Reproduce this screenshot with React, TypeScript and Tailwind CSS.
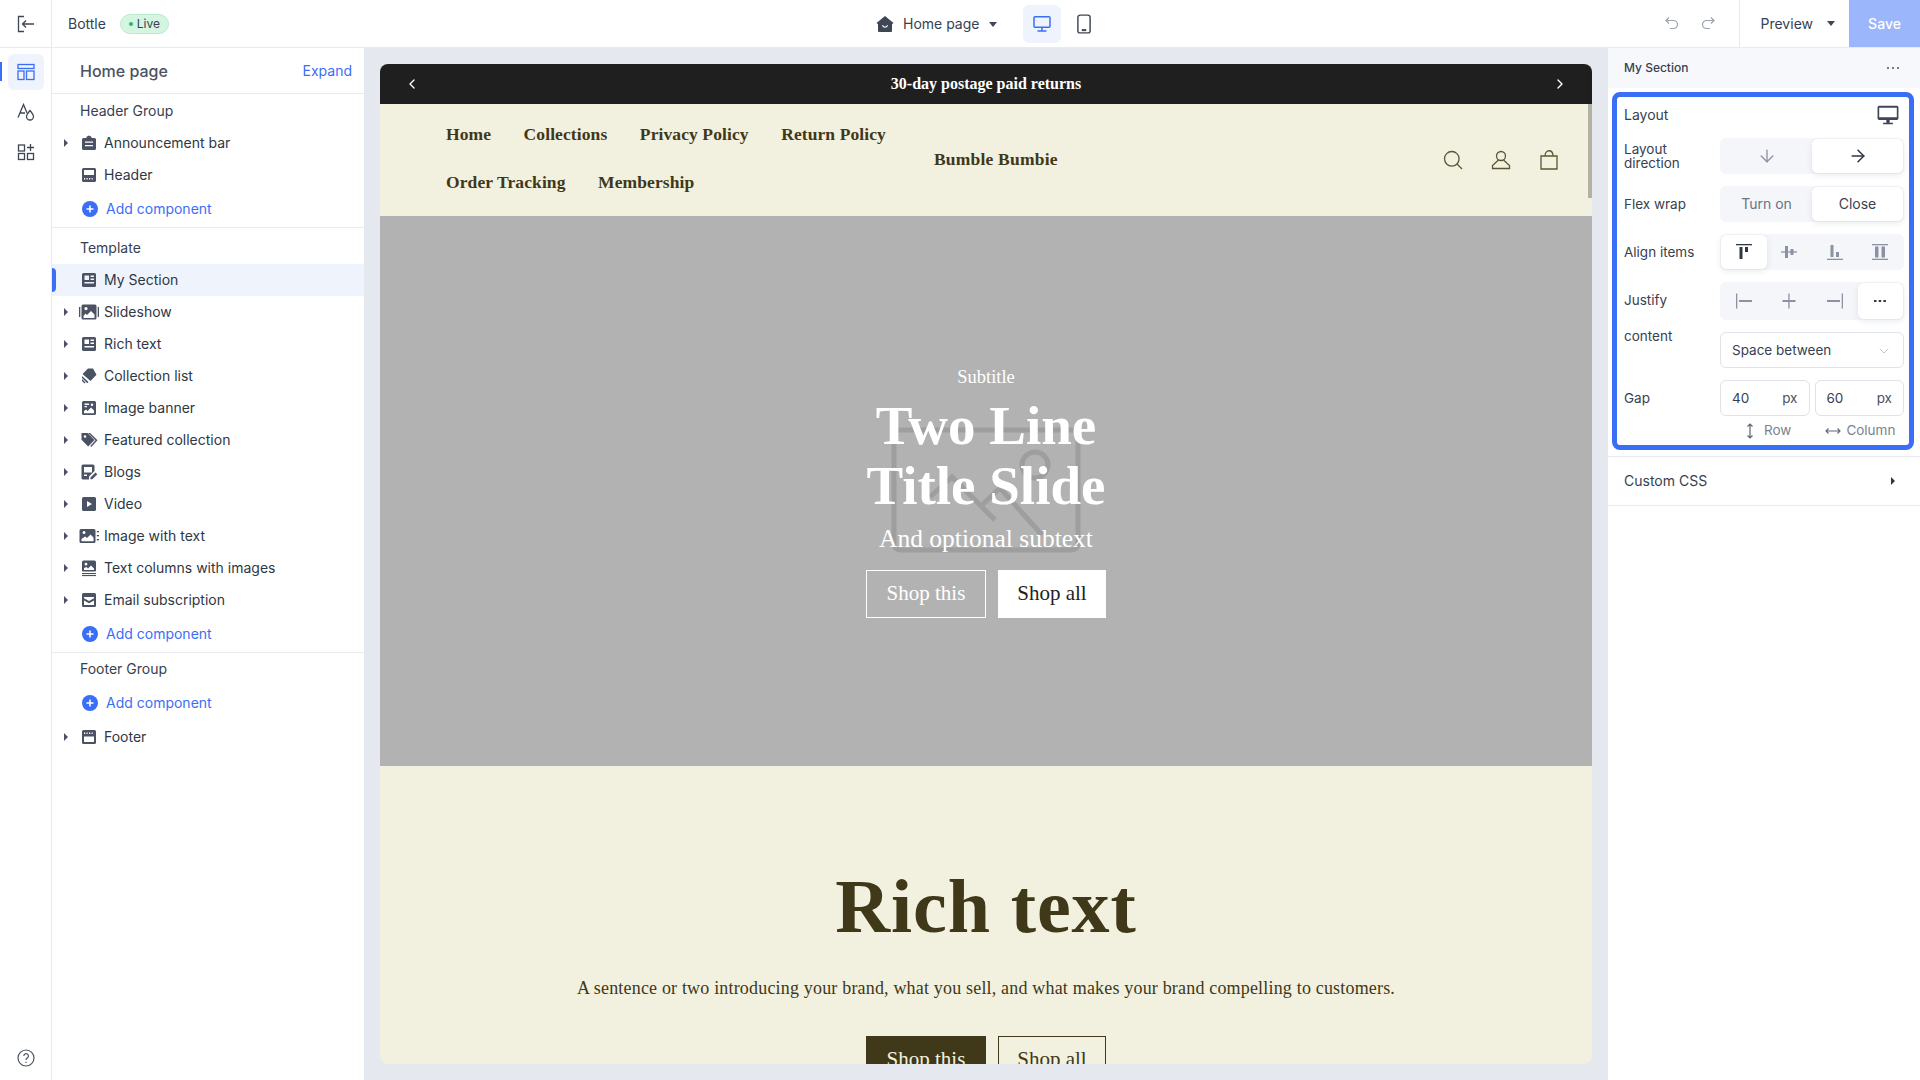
import { ArrowDown, ArrowRight, ChevronDown, ChevronLeft, ChevronRight } from "lucide-react";
import type { ReactNode } from "react";

const SERIF = "font-['Liberation_Serif',serif]";

function Glyph({ children, className = "w-5 h-5" }: { children: ReactNode; className?: string }) {
  return (
    <svg viewBox="0 0 20 20" className={`${className} shrink-0`} fill="#4b5263">
      {children}
    </svg>
  );
}

const icons: Record<string, ReactNode> = {
  announcement: (
    <Glyph>
      <path fillRule="evenodd" d="M7.5 5V3.8L10 2.5l2.500 1.300V5h3A1.500 1.500 0 0 1 17 6.500v9a1.500 1.500 0 0 1-1.500 1.500h-11A1.500 1.500 0 0 1 3 15.500v-9A1.500 1.500 0 0 1 4.500 5zM6 8.500v1.300h8V8.500zm0 3.500v1.300h8V12z" />
    </Glyph>
  ),
  header: (
    <Glyph>
      <path fillRule="evenodd" d="M4.500 3h11A1.500 1.500 0 0 1 17 4.500v11a1.500 1.500 0 0 1-1.500 1.500h-11A1.500 1.500 0 0 1 3 15.500v-11A1.500 1.500 0 0 1 4.500 3zM5 5v5h10V5zm0 8v1.500h1.200V13zm2.500 0v1.500h1.200V13zm2.500 0v1.500h1.200V13zm2.500 0v1.500h1.200V13z" />
    </Glyph>
  ),
  section: (
    <Glyph>
      <path fillRule="evenodd" d="M4.500 3h11A1.500 1.500 0 0 1 17 4.500v11a1.500 1.500 0 0 1-1.500 1.500h-11A1.500 1.500 0 0 1 3 15.500v-11A1.500 1.500 0 0 1 4.500 3zM5.500 5.500V10H10V5.500zm6 0V7H15V5.500zm0 3V10H15V8.500zM5.500 12v1.500H15V12z" />
    </Glyph>
  ),
  slideshow: (
    <Glyph>
      <rect x="0" y="5" width="1.300" height="10" />
      <rect x="18.700" y="5" width="1.300" height="10" />
      <path fillRule="evenodd" d="M4 2.500h12A1.500 1.500 0 0 1 17.500 4v12a1.500 1.500 0 0 1-1.500 1.500H4A1.500 1.500 0 0 1 2.500 16V4A1.500 1.500 0 0 1 4 2.500zm.5 11.500v2h11v-3.500L12 9l-4 4-1.500-1.500zM7 5a1.600 1.600 0 1 0 0 3.200A1.600 1.600 0 0 0 7 5z" />
    </Glyph>
  ),
  collection: (
    <Glyph>
      <path d="M9 2.500h5l3.500 6.200-6 6.300L3.500 8zM3 10l6.500 6-1.200 1.200L3 12zM3 13l3.500 3.500-1 .9L3 15z" />
    </Glyph>
  ),
  banner: (
    <Glyph>
      <path fillRule="evenodd" d="M4.500 3h11A1.500 1.500 0 0 1 17 4.500v11a1.500 1.500 0 0 1-1.500 1.500h-11A1.500 1.500 0 0 1 3 15.500v-11A1.500 1.500 0 0 1 4.500 3zM5 13v2.200h10v-2.700l-3-3-3.500 3.500-1.500-1.500zM5.500 5.500V7H10V5.500zm0 2.500v1.200H8V8zm7.500-2.500a1.300 1.300 0 1 0 0 2.600 1.300 1.300 0 0 0 0-2.600z" />
    </Glyph>
  ),
  featured: (
    <Glyph>
      <path d="M2.500 3h6l7 7-6.300 6.500-6.700-6.800zM11 3l7.500 7.300-6.200 6.700-1-1 5.200-5.700L9 3z" />
      <circle cx="6" cy="6.500" r="1.200" fill="#fff" />
    </Glyph>
  ),
  blogs: (
    <Glyph>
      <path fillRule="evenodd" d="M4 2.500h10A1.500 1.500 0 0 1 15.500 4v5l-5.500 5.500V17.500H4A1.500 1.500 0 0 1 2.500 16V4A1.500 1.500 0 0 1 4 2.500zM5 5v5.500h8V5zm0 7.500V14h3v-1.500z" />
      <path d="M16.500 10.500l1.800 1.800-5 5H11.500v-1.800z" />
    </Glyph>
  ),
  video: (
    <Glyph>
      <path fillRule="evenodd" d="M4.500 3h11A1.500 1.500 0 0 1 17 4.500v11a1.500 1.500 0 0 1-1.500 1.500h-11A1.500 1.500 0 0 1 3 15.500v-11A1.500 1.500 0 0 1 4.500 3zM8 7v6l5-3z" />
    </Glyph>
  ),
  imageText: (
    <Glyph>
      <path fillRule="evenodd" d="M2 3h13A1.500 1.500 0 0 1 16.500 4.500v11a1.500 1.500 0 0 1-1.500 1.500H2A1.500 1.500 0 0 1 .5 15.500v-11A1.500 1.500 0 0 1 2 3zm.5 10v2.200h12v-3.700L11.500 8.500 8 12l-2-1.500zM5 5a1.500 1.500 0 1 0 0 3 1.500 1.500 0 0 0 0-3z" />
      <rect x="17.800" y="5" width="2.200" height="1.300" />
      <rect x="17.800" y="9" width="2.200" height="1.300" />
      <rect x="17.800" y="13" width="2.200" height="1.300" />
    </Glyph>
  ),
  columns: (
    <Glyph>
      <path fillRule="evenodd" d="M4.500 2.500h11A1.500 1.500 0 0 1 17 4v8.500a1 1 0 0 1-1 1H4a1 1 0 0 1-1-1V4a1.500 1.500 0 0 1 1.500-1.500zM5 10v2h10v-1.500L12 7.500 9 10.500 7.500 9zM7 4.800a1.400 1.400 0 1 0 0 2.800 1.400 1.400 0 0 0 0-2.800z" />
      <rect x="3" y="15" width="14" height="1.100" />
      <rect x="3" y="17" width="14" height="1.100" />
    </Glyph>
  ),
  email: (
    <Glyph>
      <path fillRule="evenodd" d="M4.500 3h11A1.500 1.500 0 0 1 17 4.500v11a1.500 1.500 0 0 1-1.500 1.500h-11A1.500 1.500 0 0 1 3 15.500v-11A1.500 1.500 0 0 1 4.500 3zM5 7v1.300l5 2.700 5-2.700V7zm0 3.600V15h10v-4.400l-5 2.700z" />
    </Glyph>
  ),
  footer: (
    <Glyph>
      <path fillRule="evenodd" d="M4.500 3h11A1.500 1.500 0 0 1 17 4.500v11a1.500 1.500 0 0 1-1.500 1.500h-11A1.500 1.500 0 0 1 3 15.500v-11A1.500 1.500 0 0 1 4.500 3zM5 5.500V7h1.200V5.500zm2.500 0V7h1.200V5.500zm2.500 0V7h1.200V5.500zm2.500 0V7h1.200V5.500zM5 9.500V15h10V9.500z" />
    </Glyph>
  ),
};

function Caret({ className = "border-l-[#4b5263]" }: { className?: string }) {
  return <span className={`w-0 h-0 border-y-[4px] border-y-transparent border-l-[4px] ${className}`} />;
}

function CaretDown() {
  return <span className="w-0 h-0 border-x-[4px] border-x-transparent border-t-[5px] border-t-[#3f4654]" />;
}

function TreeRow({ icon, label, arrow = true, active = false }: { icon: string; label: string; arrow?: boolean; active?: boolean }) {
  return (
    <div className={`relative flex items-center h-8 ${active ? "bg-[#eff4fc]" : ""}`}>
      {active && <span className="absolute left-0 top-1 w-1 h-6 rounded-r bg-[#3b6ef6]" />}
      <span className="w-[27px] pl-[12px] flex items-center">{arrow && <Caret />}</span>
      <span className="w-[25px] flex items-center">{icons[icon]}</span>
      <span className="text-sm text-[#2f3744]">{label}</span>
    </div>
  );
}

function AddComponent() {
  return (
    <div className="flex items-center h-8 pl-[30px] gap-[8px]">
      <svg viewBox="0 0 16 16" className="w-4 h-4">
        <circle cx="8" cy="8" r="8" fill="#3b6ef6" />
        <path d="M8 4.500v7M4.500 8h7" stroke="#fff" strokeWidth="1.500" />
      </svg>
      <span className="text-sm text-[#3b6ef6]">Add component</span>
    </div>
  );
}

function GroupLabel({ children }: { children: ReactNode }) {
  return <div className="pl-[28px] text-sm text-[#374151] h-5 leading-5">{children}</div>;
}

function Sidebar() {
  return (
    <aside className="w-[312px] shrink-0 bg-white flex flex-col">
      <div className="h-[46px] flex items-center justify-between pl-[28px] pr-[12px] border-b border-[#e8eaee]">
        <span className="text-base font-medium text-[#4b5263]">Home page</span>
        <span className="text-sm text-[#3b6ef6]">Expand</span>
      </div>
      <div className="pt-[7px] pb-[2px] border-b border-[#e8eaee]">
        <div className="pb-[6px]"><GroupLabel>Header Group</GroupLabel></div>
        <TreeRow icon="announcement" label="Announcement bar" />
        <TreeRow icon="header" label="Header" arrow={false} />
        <div className="pt-[2px]"><AddComponent /></div>
      </div>
      <div className="pt-[10px] pb-[2px] border-b border-[#e8eaee]">
        <div className="pb-[6px]"><GroupLabel>Template</GroupLabel></div>
        <TreeRow icon="section" label="My Section" arrow={false} active />
        <TreeRow icon="slideshow" label="Slideshow" />
        <TreeRow icon="section" label="Rich text" />
        <TreeRow icon="collection" label="Collection list" />
        <TreeRow icon="banner" label="Image banner" />
        <TreeRow icon="featured" label="Featured collection" />
        <TreeRow icon="blogs" label="Blogs" />
        <TreeRow icon="video" label="Video" />
        <TreeRow icon="imageText" label="Image with text" />
        <TreeRow icon="columns" label="Text columns with images" />
        <TreeRow icon="email" label="Email subscription" />
        <div className="pt-[2px]"><AddComponent /></div>
      </div>
      <div className="pt-[6px]">
        <div className="pb-[8px]"><GroupLabel>Footer Group</GroupLabel></div>
        <AddComponent />
        <div className="pt-[2px]"><TreeRow icon="footer" label="Footer" /></div>
      </div>
    </aside>
  );
}

function Rail() {
  return (
    <nav className="relative w-[52px] shrink-0 bg-white border-r border-[#e8eaee] flex flex-col items-center pt-[6px]">
      <span className="absolute left-0 top-[14px] w-[2px] h-[19px] bg-[#3b6ef6]" />
      <div className="w-9 h-9 rounded-md bg-[#eff4fc] flex items-center justify-center">
        <svg viewBox="0 0 18 18" className="w-[18px] h-[18px]" fill="none" stroke="#3b6ef6" strokeWidth="1.300">
          <rect x="1" y="1.500" width="16" height="4" />
          <rect x="1" y="8" width="6" height="8.500" />
          <rect x="9.500" y="8" width="7.500" height="8.500" />
        </svg>
      </div>
      <div className="h-10 mt-[2px] flex items-center">
        <svg viewBox="0 0 18 18" className="w-[18px] h-[18px]" fill="none" stroke="#3f4654" strokeWidth="1.300">
          <path d="M1 14.500 6.500 1.500 10 10M3 10h5" />
          <path d="M13 7.500c2 2.500 3.500 4 3.500 6a3.500 3.500 0 0 1-7 0c0-2 1.500-3.500 3.500-6z" />
        </svg>
      </div>
      <div className="h-10 flex items-center">
        <svg viewBox="0 0 18 18" className="w-[18px] h-[18px]" fill="none" stroke="#3f4654" strokeWidth="1.300">
          <rect x="1.500" y="2" width="6" height="6" />
          <rect x="1.500" y="10.500" width="6" height="6" />
          <rect x="10.500" y="10.500" width="6" height="6" />
          <path d="M13.500 1v7M10 4.500h7" />
        </svg>
      </div>
      <div className="mt-auto pb-[13px] flex">
        <svg viewBox="0 0 18 18" className="w-[18px] h-[18px]" fill="none" stroke="#4b5263" strokeWidth="1.200">
          <circle cx="9" cy="9" r="8" />
          <path d="M6.800 7a2.300 2.300 0 1 1 3.500 2c-.9.500-1.300 1-1.300 2" />
          <path d="M9 12.800v1.200" />
        </svg>
      </div>
    </nav>
  );
}

function TopBar() {
  return (
    <header className="h-12 shrink-0 bg-white border-b border-[#e8eaee] flex items-center relative">
      <div className="w-[52px] h-full border-r border-[#e8eaee] flex items-center justify-center">
        <svg viewBox="0 0 18 18" className="w-[18px] h-[18px]" fill="none" stroke="#3f4654" strokeWidth="1.300">
          <path d="M7 1.500H1.500v15H7" />
          <path d="M17 9H5.500M9 5.500 5.500 9 9 12.500" />
        </svg>
      </div>
      <span className="ml-4 text-sm text-[#374151]">Bottle</span>
      <span className="ml-[14px] h-5 w-[49px] rounded-full bg-[#d3f5e1] border border-[#b9eccd] flex items-center justify-center gap-[4px] text-xs text-[#374151]">
        <span className="w-1 h-1 rounded-full bg-[#33b36b]" />
        Live
      </span>
      <div className="absolute left-[876px] top-[5px] flex items-center">
        <svg viewBox="0 0 18 18" className="w-[18px] h-[18px]" fill="#3f4654">
          <path fillRule="evenodd" d="M9 1 17.500 8 16 9.200V16a1 1 0 0 1-1 1H3a1 1 0 0 1-1-1V9.200L.5 8zM6 10.500c.6 1.500 1.700 2.200 3 2.200s2.400-.7 3-2.200l-1-.4c-.4 1-1.100 1.500-2 1.500s-1.600-.5-2-1.500z" />
        </svg>
        <span className="ml-[9px] text-sm text-[#374151]">Home page</span>
        <span className="ml-[10px] flex"><CaretDown /></span>
        <div className="ml-[26px] w-[38px] h-[38px] rounded-md bg-[#eff4fc] flex items-center justify-center">
          <svg viewBox="0 0 18 18" className="w-[18px] h-[18px]" fill="none" stroke="#3b6ef6" strokeWidth="1.500">
            <rect x="1" y="1.800" width="16" height="10.500" rx="1" />
            <path d="M9 12.500v3.200M4.500 16h9" />
          </svg>
        </div>
        <div className="ml-[13px] flex">
          <svg viewBox="0 0 18 18" className="w-[20px] h-[20px]" fill="none" stroke="#3f4654" strokeWidth="1.300">
            <rect x="3.500" y="1" width="11" height="16" rx="2" />
            <path d="M7 14.500h4" strokeWidth="1.800" />
          </svg>
        </div>
      </div>
      <div className="ml-auto h-full flex items-center">
        <svg viewBox="0 0 16 16" className="w-4 h-4" fill="none" stroke="#9ca3af" strokeWidth="1.200">
          <path d="M5 1.500 2 4.500l3 3M2 4.500h7.500a4 4 0 0 1 0 8H6" />
        </svg>
        <svg viewBox="0 0 16 16" className="ml-[20px] w-4 h-4" fill="none" stroke="#9ca3af" strokeWidth="1.200">
          <path d="M11 1.500l3 3-3 3M14 4.500H6.500a4 4 0 0 0 0 8H10" />
        </svg>
        <div className="ml-[23px] h-full pl-[21px] pr-[14px] border-l border-[#e8eaee] flex items-center gap-[14px]">
          <span className="text-sm text-[#374151]">Preview</span>
          <CaretDown />
        </div>
        <div className="h-full w-[71px] bg-[#9cb6fb] text-white text-sm font-medium flex items-center justify-center">Save</div>
      </div>
    </header>
  );
}

function AlignIcon({ d, color }: { d: ReactNode; color: string }) {
  return (
    <svg viewBox="0 0 16 16" className="w-4 h-4" fill={color}>
      {d}
    </svg>
  );
}

function Segment({ children, className = "" }: { children: ReactNode; className?: string }) {
  return <div className={`flex-1 flex bg-[#f5f6fa] rounded-md p-[1px] ${className}`}>{children}</div>;
}

function Cell({ on = false, children }: { on?: boolean; children: ReactNode }) {
  return (
    <div className={`flex-1 flex items-center justify-center rounded-md text-sm ${on ? "bg-white shadow-[0_2px_6px_rgba(30,40,70,0.10)] text-[#374151]" : "text-[#6b7280]"}`}>
      {children}
    </div>
  );
}

const GREY = "#8b92a1";
const DARK = "#2f3744";

function Inspector() {
  return (
    <aside className="w-[312px] shrink-0 bg-white flex flex-col">
      <div className="h-[40px] bg-[#f7f8fb] flex items-center justify-between pl-4 pr-[21px]">
        <span className="text-xs font-medium text-[#374151]">My Section</span>
        <span className="flex gap-[3px]">
          <i className="w-[2px] h-[2px] rounded-full bg-[#4b5263]" />
          <i className="w-[2px] h-[2px] rounded-full bg-[#4b5263]" />
          <i className="w-[2px] h-[2px] rounded-full bg-[#4b5263]" />
        </span>
      </div>
      <div className="mt-1 ml-1 mr-[6px] rounded-lg border-[5px] border-[#3b6ef6] pl-[7px] pr-[5px] h-[358px] flex flex-col text-[#374151] text-sm">
        <div className="h-[36px] flex items-center justify-between">
          <span>Layout</span>
          <svg viewBox="0 0 20 20" className="w-[22px] h-[22px] mr-[5px]" fill="#3f4654">
            <path fillRule="evenodd" d="M2 1.500h16A1.500 1.500 0 0 1 19.500 3v10a1.500 1.500 0 0 1-1.500 1.500H2A1.500 1.500 0 0 1 .5 13V3A1.500 1.500 0 0 1 2 1.500zm0 2V12h16V3.500z" />
            <path d="M8.500 14.500h3v2.500h3v1.500h-9V17h3z" />
          </svg>
        </div>
        <div className="flex h-[36px] mt-[5px]">
          <span className="w-[96px] text-[13.500px] leading-[14px] pt-[4px]">Layout direction</span>
          <Segment>
            <Cell><ArrowDown className="w-5 h-5" color={GREY} strokeWidth={1.600} /></Cell>
            <Cell on><ArrowRight className="w-5 h-5" color={DARK} strokeWidth={1.800} /></Cell>
          </Segment>
        </div>
        <div className="flex items-center h-[36px] mt-[12px]">
          <span className="w-[96px] text-[13.500px] pt-[1px]">Flex wrap</span>
          <Segment className="h-full">
            <Cell>Turn on</Cell>
            <Cell on>Close</Cell>
          </Segment>
        </div>
        <div className="flex items-center h-[36px] mt-[12px]">
          <span className="w-[96px] text-[13.500px] pt-[1px]">Align items</span>
          <Segment className="h-full">
            <Cell on>
              <AlignIcon color={DARK} d={<><rect x="0" y="0" width="16" height="1.300" /><rect x="3.500" y="3" width="3" height="12" /><rect x="9" y="3" width="3" height="5" /></>} />
            </Cell>
            <Cell>
              <AlignIcon color={GREY} d={<><rect x="0" y="7.300" width="16" height="1.300" /><rect x="4" y="2" width="3" height="12" /><rect x="9.500" y="5" width="3" height="6" /></>} />
            </Cell>
            <Cell>
              <AlignIcon color={GREY} d={<><rect x="0" y="14.700" width="16" height="1.300" /><rect x="3.500" y="1" width="3" height="12" /><rect x="9" y="8" width="3" height="5" /></>} />
            </Cell>
            <Cell>
              <AlignIcon color={GREY} d={<><rect x="0" y="0" width="16" height="1.300" /><rect x="0" y="14.700" width="16" height="1.300" /><rect x="3" y="2.500" width="3.500" height="11" /><rect x="9.500" y="2.500" width="3.500" height="11" /></>} />
            </Cell>
          </Segment>
        </div>
        <div className="flex items-center h-[38px] mt-[12px]">
          <span className="w-[96px] text-[13.500px]">Justify</span>
          <Segment className="h-full">
            <Cell>
              <AlignIcon color={GREY} d={<><rect x="0" y="0.500" width="1.300" height="15" /><rect x="3" y="7" width="13" height="2" /></>} />
            </Cell>
            <Cell>
              <AlignIcon color={GREY} d={<><rect x="7.300" y="0.500" width="1.300" height="15" /><rect x="1.500" y="7" width="13" height="2" /></>} />
            </Cell>
            <Cell>
              <AlignIcon color={GREY} d={<><rect x="14.700" y="0.500" width="1.300" height="15" /><rect x="0" y="7" width="13" height="2" /></>} />
            </Cell>
            <Cell on>
              <AlignIcon color={DARK} d={<><rect x="2" y="7" width="2.500" height="2" /><rect x="6.700" y="7" width="2.500" height="2" /><rect x="11.400" y="7" width="2.500" height="2" /></>} />
            </Cell>
          </Segment>
        </div>
        <div className="flex h-[36px] mt-[12px]">
          <span className="w-[96px] text-[13.500px] leading-[14px] -mt-[3px]">content</span>
          <div className="flex-1 border border-[#dfe2e8] rounded-md flex items-center justify-between pl-[11px] pr-[11px] pt-[1px]">
            <span className="text-[13.500px]">Space between</span>
            <ChevronDown className="w-4 h-4" color="#b6bbc5" strokeWidth={1.200} />
          </div>
        </div>
        <div className="flex items-center h-[36px] mt-[12px]">
          <span className="w-[96px] text-[13.500px] pt-[1px]">Gap</span>
          <div className="flex-1 flex gap-[5px] h-full">
            <div className="flex-1 border border-[#dfe2e8] rounded-md flex items-center justify-between pl-[11px] pr-[11px] pt-[1px]">
              <span className="text-[13.500px]">40</span>
              <span className="text-[13.500px] text-[#4b5263]">px</span>
            </div>
            <div className="flex-1 border border-[#dfe2e8] rounded-md flex items-center justify-between pl-[11px] pr-[11px] pt-[1px]">
              <span className="text-[13.500px]">60</span>
              <span className="text-[13.500px] text-[#4b5263]">px</span>
            </div>
          </div>
        </div>
        <div className="flex mt-[5px] ml-[96px] text-[13.500px] text-[#7b8290] h-5 items-center">
          <span className="w-[20px] ml-[24px] flex">
            <svg viewBox="0 0 12 16" className="w-3 h-4" fill="none" stroke="#5f6675" strokeWidth="1.200">
              <path d="M6 1v14M3.500 3.500 6 1l2.500 2.500M3.500 12.500 6 15l2.500-2.500" />
            </svg>
          </span>
          <span>Row</span>
          <span className="ml-[34px] w-[21px] flex">
            <svg viewBox="0 0 16 12" className="w-4 h-3" fill="none" stroke="#5f6675" strokeWidth="1.100">
              <path d="M1 6h14M3.500 3.500 1 6l2.500 2.500M12.500 3.500 15 6l-2.500 2.500" />
            </svg>
          </span>
          <span>Column</span>
        </div>
      </div>
      <div className="mt-[6px] h-[50px] border-y border-[#e8eaee] flex items-center justify-between pl-4 pr-[25px] text-sm text-[#374151]">
        <span>Custom CSS</span>
        <Caret className="border-l-[#2f3744]" />
      </div>
    </aside>
  );
}

function Storefront() {
  return (
    <div className="relative flex-1 rounded-lg overflow-hidden flex flex-col">
      <div className="h-10 shrink-0 bg-[#1f1f1f] flex items-center justify-between pl-[24px] pr-[24px] text-white">
        <ChevronLeft className="w-4 h-4" strokeWidth={2} />
        <span className={`${SERIF} text-[16px] leading-[22px] pb-[1px] font-bold`}>30-day postage paid returns</span>
        <ChevronRight className="w-4 h-4" strokeWidth={2} />
      </div>
      <div className="h-[112px] shrink-0 bg-[#f2f1df] flex items-center pl-[66px] pr-[33px] text-[#3f3819]">
        <div className="w-[488px] flex flex-wrap gap-x-[32.500px] gap-y-[24px] pb-[4px]">
          {["Home", "Collections", "Privacy Policy", "Return Policy", "Order Tracking", "Membership"].map((item) => (
            <span key={item} className={`${SERIF} text-[17.500px] leading-[24px] font-bold tracking-[0.1px]`}>{item}</span>
          ))}
        </div>
        <span className={`${SERIF} text-[17.500px] font-bold tracking-[0.2px] pb-[1px]`}>Bumble Bumbie</span>
        <div className="ml-auto flex gap-[28px] items-center">
          <svg viewBox="0 0 20 20" className="w-5 h-5" fill="none" stroke="#5b5535" strokeWidth="1.300">
            <circle cx="8.800" cy="8.800" r="7.300" />
            <path d="m14 14 5 5" />
          </svg>
          <svg viewBox="0 0 20 20" className="w-5 h-5" fill="none" stroke="#5b5535" strokeWidth="1.300">
            <circle cx="10" cy="6" r="4.500" />
            <path d="M7.500 10 1.500 15.500v3h17v-3L12.500 10" />
          </svg>
          <svg viewBox="0 0 20 20" className="w-5 h-5" fill="none" stroke="#5b5535" strokeWidth="1.300">
            <path d="M2 6h16v13H2zM6 6c0-7 8-7 8 0" />
          </svg>
        </div>
      </div>
      <div className="relative h-[550px] shrink-0 bg-[#b2b2b2] flex flex-col items-center text-white pt-[151px]">
        <svg viewBox="0 0 194 130" className="absolute left-[509px] top-[209px] w-[194px] h-[130px]" fill="none" stroke="#9e9e9e" strokeWidth="5">
          <rect x="5" y="5" width="184" height="120" rx="6" />
          <circle cx="146" cy="40" r="13" />
          <path d="M41 72 63 52l43 43M93 80l18-17 42 47" />
        </svg>
        <span className={`${SERIF} relative text-[18.500px] leading-[20px]`}>Subtitle</span>
        <h2 className={`${SERIF} relative mt-[9px] text-[55px] leading-[60px] font-bold text-center`}>
          Two Line
          <br />
          Title Slide
        </h2>
        <span className={`${SERIF} relative mt-[8px] text-[25.500px] leading-[30px]`}>And optional subtext</span>
        <div className="relative mt-[16px] flex gap-3">
          <div className={`${SERIF} w-[120px] h-12 border border-white flex items-center justify-center text-[21px]`}>Shop this</div>
          <div className={`${SERIF} w-[108px] h-12 bg-white text-[#1f1f1f] flex items-center justify-center text-[21px]`}>Shop all</div>
        </div>
      </div>
      <div className="flex-1 bg-[#f2f1df] flex flex-col items-center text-[#3f3819] pt-[98px]">
        <h2 className={`${SERIF} text-[76px] leading-[84px] font-bold tracking-[0.9px]`}>Rich text</h2>
        <p className={`${SERIF} mt-[28px] text-[18px] leading-[24px] tracking-[0.18px]`}>A sentence or two introducing your brand, what you sell, and what makes your brand compelling to customers.</p>
        <div className="mt-[36px] flex gap-3">
          <div className={`${SERIF} w-[120px] h-12 bg-[#3f3819] text-[#f2f1df] flex items-center justify-center text-[21px]`}>Shop this</div>
          <div className={`${SERIF} w-[108px] h-12 border border-[#3f3819] flex items-center justify-center text-[21px]`}>Shop all</div>
        </div>
      </div>
      <span className="absolute right-0 top-0 w-1 h-[134px] rounded-tr-lg bg-[#1f1f1f]/30" />
    </div>
  );
}

export default function App() {
  return (
    <div className="w-[1920px] h-[1080px] overflow-hidden flex flex-col font-['Inter',sans-serif] bg-white">
      <TopBar />
      <div className="flex-1 flex min-h-0">
        <Rail />
        <Sidebar />
        <main className="flex-1 min-w-0 bg-[#e5e8ee] pt-4 pb-4 px-4 flex flex-col">
          <Storefront />
        </main>
        <Inspector />
      </div>
    </div>
  );
}
